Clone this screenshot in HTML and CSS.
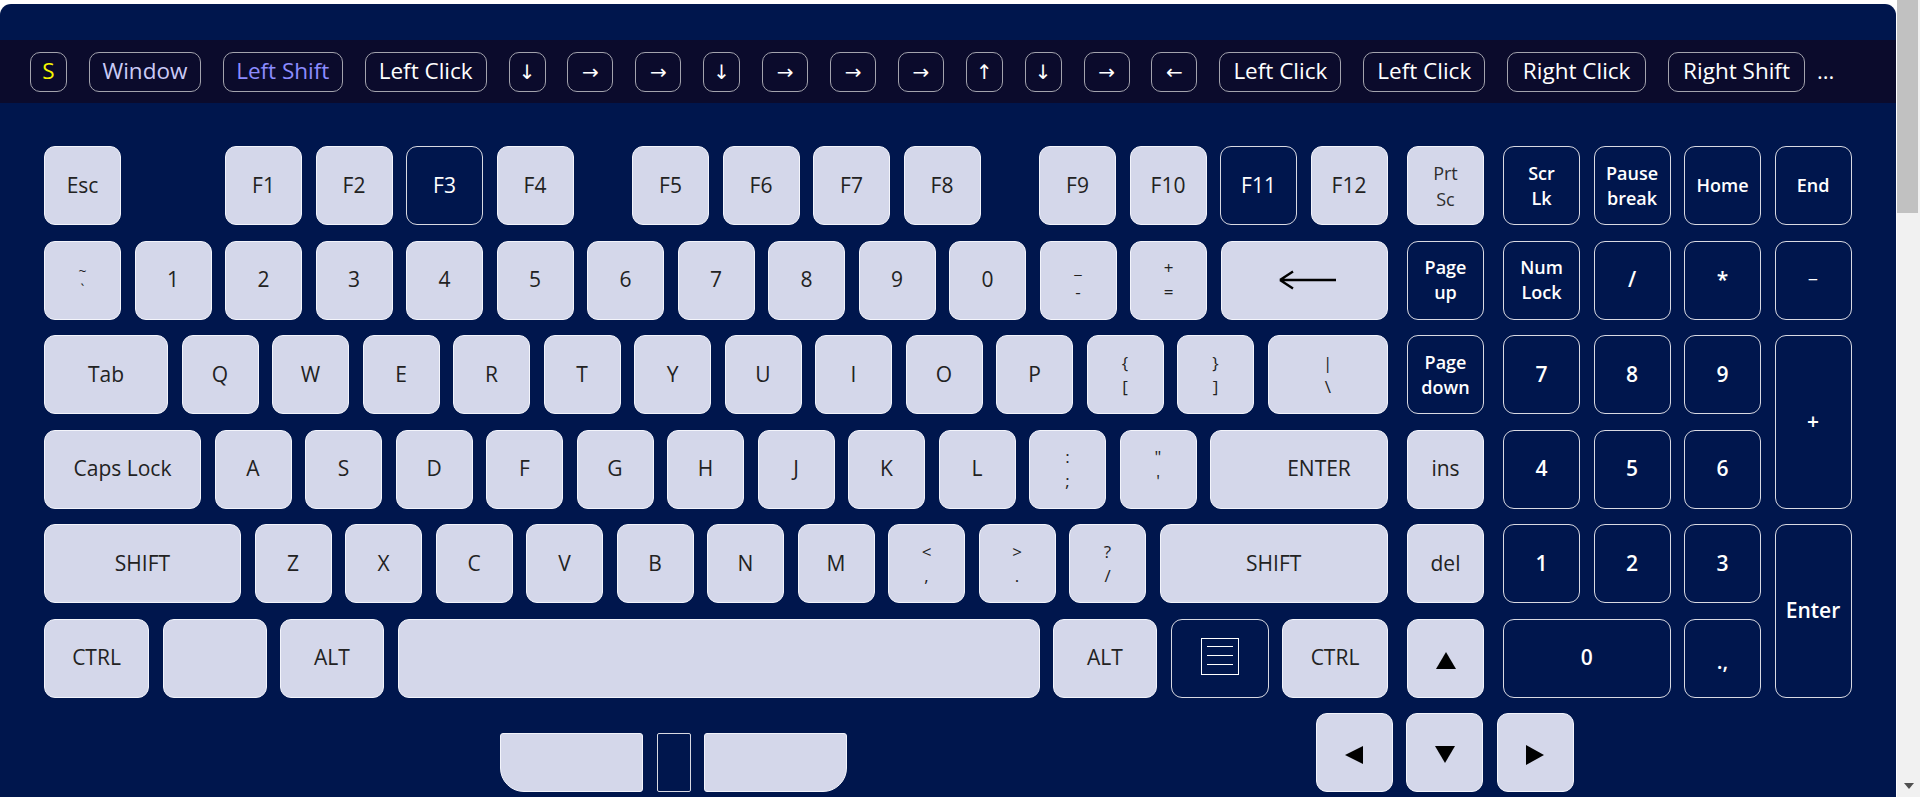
FILE: index.html
```html
<!DOCTYPE html>
<html lang="en">
<head>
<meta charset="utf-8">
<title>Keyboard</title>
<link rel="stylesheet" href="styles.css">
</head>
<body>
<div class="panel">
  <div class="bar">
    <span class="chip yel w-s">S</span>
    <span class="chip lav w-win">Window</span>
    <span class="chip pur w-ls">Left Shift</span>
    <span class="chip w-lc">Left Click</span>
    <span class="chip vr">↓</span>
    <span class="chip hr">→</span>
    <span class="chip hr">→</span>
    <span class="chip vr">↓</span>
    <span class="chip hr">→</span>
    <span class="chip hr">→</span>
    <span class="chip hr">→</span>
    <span class="chip vr">↑</span>
    <span class="chip vr">↓</span>
    <span class="chip hr">→</span>
    <span class="chip hr">←</span>
    <span class="chip w-lc">Left Click</span>
    <span class="chip w-lc">Left Click</span>
    <span class="chip w-rc">Right Click</span>
    <span class="chip w-rs">Right Shift</span>
    <span class="more">...</span>
  </div>

  <div class="kb">
    <div class="main">
      <div class="row">
        <div class="key">Esc</div>
        <div class="key gap-f1">F1</div>
        <div class="key">F2</div>
        <div class="key dk">F3</div>
        <div class="key">F4</div>
        <div class="key gap-f">F5</div>
        <div class="key">F6</div>
        <div class="key">F7</div>
        <div class="key">F8</div>
        <div class="key gap-f">F9</div>
        <div class="key">F10</div>
        <div class="key dk">F11</div>
        <div class="key">F12</div>
      </div>
      <div class="row">
        <div class="key two"><span class="sm">~<br>`</span></div>
        <div class="key">1</div>
        <div class="key">2</div>
        <div class="key">3</div>
        <div class="key">4</div>
        <div class="key">5</div>
        <div class="key">6</div>
        <div class="key">7</div>
        <div class="key">8</div>
        <div class="key">9</div>
        <div class="key">0</div>
        <div class="key two"><span>_<br>-</span></div>
        <div class="key two"><span>+<br>=</span></div>
        <div class="key w-bs">
          <svg class="bs" width="60" height="24" viewBox="0 0 60 24"><path d="M59 12H3M3 12L16 3.5M3 12L16 20.5" fill="none" stroke="#000" stroke-width="2.4"/></svg>
        </div>
      </div>
      <div class="row">
        <div class="key w-tab">Tab</div>
        <div class="key">Q</div>
        <div class="key">W</div>
        <div class="key">E</div>
        <div class="key">R</div>
        <div class="key">T</div>
        <div class="key">Y</div>
        <div class="key">U</div>
        <div class="key">I</div>
        <div class="key">O</div>
        <div class="key">P</div>
        <div class="key two"><span>{<br>[</span></div>
        <div class="key two"><span>}<br>]</span></div>
        <div class="key two w-bsl"><span>|<br>\</span></div>
      </div>
      <div class="row">
        <div class="key w-caps">Caps Lock</div>
        <div class="key">A</div>
        <div class="key">S</div>
        <div class="key">D</div>
        <div class="key">F</div>
        <div class="key">G</div>
        <div class="key">H</div>
        <div class="key">J</div>
        <div class="key">K</div>
        <div class="key">L</div>
        <div class="key two"><span>:<br>;</span></div>
        <div class="key two"><span>"<br>'</span></div>
        <div class="key w-ent">ENTER</div>
      </div>
      <div class="row">
        <div class="key w-lsh">SHIFT</div>
        <div class="key">Z</div>
        <div class="key">X</div>
        <div class="key">C</div>
        <div class="key">V</div>
        <div class="key">B</div>
        <div class="key">N</div>
        <div class="key">M</div>
        <div class="key two"><span>&lt;<br>,</span></div>
        <div class="key two"><span>&gt;<br>.</span></div>
        <div class="key two"><span>?<br>/</span></div>
        <div class="key w-rsh">SHIFT</div>
      </div>
      <div class="row">
        <div class="key w-ctl">CTRL</div>
        <div class="key w-winkey"></div>
        <div class="key w-alt">ALT</div>
        <div class="key w-spc"></div>
        <div class="key w-alt">ALT</div>
        <div class="key dk w-menu">
          <svg width="38" height="37" viewBox="0 0 38 37"><rect x="0.5" y="0.5" width="37" height="36" fill="none" stroke="#fff"/><path d="M6 8.5H32M6 17.5H32M6 26.5H32" stroke="#fff" stroke-width="1"/></svg>
        </div>
        <div class="key w-ctr">CTRL</div>
      </div>
    </div>

    <div class="nav">
      <div class="key two prt"><span>Prt<br>Sc</span></div>
      <div class="key dk nv"><span>Page<br>up</span></div>
      <div class="key dk nv"><span>Page<br>down</span></div>
      <div class="key">ins</div>
      <div class="key">del</div>
      <div class="key tri">
        <svg width="20" height="17" viewBox="0 0 20 17"><path d="M10 0L20 17H0Z" fill="#000"/></svg>
      </div>
    </div>

    <div class="pad">
      <div class="key dk nv"><span>Scr<br>Lk</span></div>
      <div class="key dk nv"><span>Pause<br>break</span></div>
      <div class="key dk nv">Home</div>
      <div class="key dk nv">End</div>
      <div class="key dk nv"><span>Num<br>Lock</span></div>
      <div class="key dk pd">/</div>
      <div class="key dk pd">*</div>
      <div class="key dk pd thin">−</div>
      <div class="key dk pd">7</div>
      <div class="key dk pd">8</div>
      <div class="key dk pd">9</div>
      <div class="key dk pd span-r">+</div>
      <div class="key dk pd">4</div>
      <div class="key dk pd">5</div>
      <div class="key dk pd">6</div>
      <div class="key dk pd">1</div>
      <div class="key dk pd">2</div>
      <div class="key dk pd">3</div>
      <div class="key dk pd span-r">Enter</div>
      <div class="key dk pd span-c">0</div>
      <div class="key dk pd"><span class="dc">.,</span></div>
    </div>
  </div>

  <div class="row6">
    <div class="mouse">
      <div class="mbtn ml"></div>
      <div class="wheel"></div>
      <div class="mbtn mr"></div>
    </div>
    <div class="arrows">
      <div class="key tri">
        <svg width="18" height="18" viewBox="0 0 18 18"><path d="M0 9L18 0V18Z" fill="#000"/></svg>
      </div>
      <div class="key tri">
        <svg width="20" height="17" viewBox="0 0 20 17"><path d="M0 0H20L10 17Z" fill="#000"/></svg>
      </div>
      <div class="key tri">
        <svg width="18" height="20" viewBox="0 0 18 20"><path d="M0 0L18 10L0 20Z" fill="#000"/></svg>
      </div>
    </div>
  </div>
</div>
<div class="below"></div>

<div class="vscroll" aria-hidden="true">
  <div class="thumb"></div>
  <svg class="sdown" width="10" height="6" viewBox="0 0 10 6"><path d="M0 0H10L5 6Z" fill="#505050"/></svg>
</div>
</body>
</html>
```

FILE: styles.css
```css
* {
  box-sizing: border-box;
}

html,
body {
  margin: 0;
  padding: 0;
}

body {
  background: #ffffff;
  font-family: "Open Sans", "Noto Sans", "DejaVu Sans", sans-serif;
}

.panel {
  margin: 4px 24px 0 0;
  background: #00164d;
  border-radius: 11px 11px 0 0;
  padding: 36px 0 40px;
}

/* top strip with chips */
.bar {
  height: 63px;
  background: #0b0b2c;
  display: flex;
  align-items: center;
  gap: 21.9px;
  padding-left: 30px;
}

.chip {
  height: 40px;
  border: 1px solid #a3a3ad;
  border-radius: 10px;
  padding: 0;
  display: flex;
  align-items: center;
  justify-content: center;
  font-size: 22.5px;
  line-height: 1;
  color: #ffffff;
  white-space: nowrap;
  flex: none;
}

.w-s {
  width: 37px;
}

.w-win {
  width: 112px;
}

.w-ls {
  width: 120px;
}

.w-lc {
  width: 122px;
}

.w-rc {
  width: 139px;
}

.w-rs {
  width: 137px;
}

.chip.vr {
  width: 37px;
  font-family: "DejaVu Sans", sans-serif;
  font-size: 20px;
}

.chip.hr {
  width: 46px;
  font-family: "DejaVu Sans", sans-serif;
  font-size: 20px;
}

.yel {
  color: #f6f600;
}

.lav {
  color: #cacaf6;
}

.pur {
  color: #8c8cff;
}

.more {
  color: #ffffff;
  font-size: 22px;
  margin-left: -10px;
  padding-bottom: 4px;
}

/* keyboard body */
.kb {
  display: flex;
  gap: 19px;
  margin-top: 43px;
  padding-left: 44px;
}

.main {
  display: flex;
  flex-direction: column;
  gap: 15.5px;
  width: 1344px;
  flex: none;
}

.row {
  display: flex;
  gap: 13.5px;
}

.key {
  width: 77px;
  height: 79px;
  flex: none;
  background: #d4d7ea;
  border: 1px solid #f3f4fb;
  border-radius: 11px;
  display: flex;
  align-items: center;
  justify-content: center;
  text-align: center;
  font-size: 21px;
  line-height: 1.2;
  color: #222222;
}

.key.dk {
  background: #00164d;
  border-color: #d8d9e2;
  color: #ffffff;
}

.key.two {
  font-size: 17px;
  line-height: 24px;
}

.key.two .sm {
  font-size: 14px;
  line-height: 19px;
}

.gap-f1 {
  margin-left: 90.5px;
}

.gap-f {
  margin-left: 45px;
}

.w-bs {
  width: 167.5px;
}

.bs {
  margin-left: 6px;
}

.w-tab {
  width: 124px;
}

.w-bsl {
  width: 120.5px;
}

.w-caps {
  width: 157px;
}

.w-ent {
  width: 178px;
  padding-left: 40px;
}

.w-lsh {
  width: 197px;
}

.w-rsh {
  width: 228.5px;
}

.w-ctl {
  width: 105px;
}

.w-winkey {
  width: 104px;
}

.w-alt {
  width: 104px;
}

.w-spc {
  width: 642px;
}

.w-menu {
  width: 98px;
  padding-bottom: 3px;
}

.w-ctr {
  width: 106px;
}

/* navigation column */
.nav {
  display: flex;
  flex-direction: column;
  gap: 15.5px;
  flex: none;
}

.key.prt {
  font-size: 18px;
  line-height: 26px;
  color: #2e2e2e;
}

.key.nv {
  font-size: 18px;
  font-weight: 600;
  line-height: 25px;
}

.key.pd {
  font-size: 21px;
  font-weight: 600;
}

.key.pd.thin {
  font-weight: 400;
  font-size: 18px;
}

.dc {
  padding-top: 8px;
}

.key.tri {
  padding-top: 4px;
}

/* numeric pad */
.pad {
  display: grid;
  grid-template-columns: repeat(4, 77px);
  grid-auto-rows: 79px;
  column-gap: 13.5px;
  row-gap: 15.5px;
  flex: none;
}

.pad .key {
  width: auto;
  height: auto;
}

.span-r {
  grid-row: span 2;
}

.span-c {
  grid-column: span 2;
}

/* bottom row: mouse + arrows */
.row6 {
  display: flex;
  align-items: flex-end;
  margin-top: 15.5px;
  padding-left: 499.5px;
}

.mouse {
  display: flex;
  height: 59px;
  flex: none;
}

.mbtn {
  width: 143px;
  background: #d4d7ea;
  border: 1px solid #f3f4fb;
}

.mbtn.ml {
  border-radius: 3px 3px 3px 24px;
}

.mbtn.mr {
  border-radius: 3px 3px 24px 3px;
}

.wheel {
  width: 34px;
  margin: 0 12.5px 0 14.5px;
  background: #00164d;
  border: 1px solid #d8d9e2;
  border-radius: 2px;
}

.arrows {
  display: flex;
  gap: 13.5px;
  margin-left: 469px;
}

.below {
  height: 2000px;
}

/* window scrollbar as it appears in the capture */
.vscroll {
  position: fixed;
  top: 0;
  right: 0;
  width: 23px;
  height: 100vh;
  background: #f1f1f1;
}

.thumb {
  position: absolute;
  top: 0;
  left: 0;
  right: 2px;
  height: 213px;
  background: #c1c1c1;
}

.sdown {
  position: absolute;
  left: 7px;
  bottom: 8px;
}
```
